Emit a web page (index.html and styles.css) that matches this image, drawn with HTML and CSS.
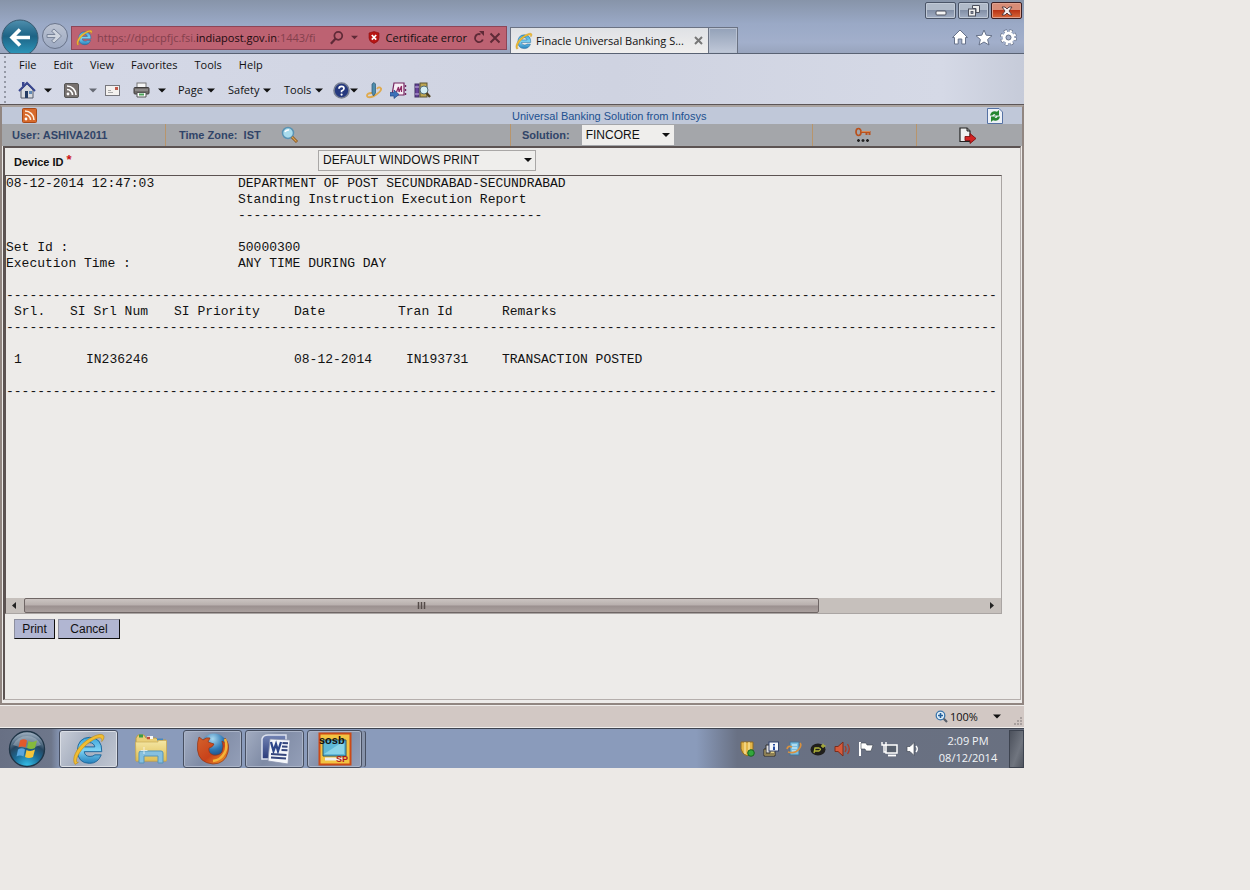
FILE: index.html
```html
<!DOCTYPE html>
<html lang="en">
<head>
<meta charset="utf-8">
<title>Finacle Universal Banking Solution</title>
<link rel="stylesheet" href="styles.css">
</head>
<body>
<svg class="defs" aria-hidden="true">
  <defs>
    <linearGradient id="gBack" x1="0" y1="0" x2="0" y2="1"><stop offset="0" stop-color="#4f8fae"/><stop offset=".45" stop-color="#1d6385"/><stop offset="1" stop-color="#2e9cc0"/></linearGradient>
    <linearGradient id="gFwd" x1="0" y1="0" x2="0" y2="1"><stop offset="0" stop-color="#bdc4d2"/><stop offset="1" stop-color="#9ca9c2"/></linearGradient>
    <linearGradient id="gIe" x1="0" y1="0" x2="0" y2="1"><stop offset="0" stop-color="#3ba4da"/><stop offset=".5" stop-color="#7fd3f3"/><stop offset="1" stop-color="#2581bd"/></linearGradient>
    <radialGradient id="gOrb" cx=".5" cy="1" r="1"><stop offset="0" stop-color="#35c4ee"/><stop offset=".4" stop-color="#1b6b96"/><stop offset=".65" stop-color="#26455f"/><stop offset="1" stop-color="#a9b9c9"/></radialGradient>
    <linearGradient id="gFolder" x1="0" y1="0" x2="0" y2="1"><stop offset="0" stop-color="#f4e6a4"/><stop offset="1" stop-color="#dfbf55"/></linearGradient>
    <linearGradient id="gFox" x1="0" y1="0" x2="1" y2="1"><stop offset="0" stop-color="#d4622b"/><stop offset=".55" stop-color="#c9421a"/><stop offset="1" stop-color="#f2a32c"/></linearGradient>
    <radialGradient id="gGlobe" cx=".45" cy=".2" r=".8"><stop offset="0" stop-color="#a8d8ef"/><stop offset=".5" stop-color="#2e78b4"/><stop offset="1" stop-color="#173468"/></radialGradient>
    <linearGradient id="gWord" x1="0" y1="0" x2="0" y2="1"><stop offset="0" stop-color="#7384b4"/><stop offset="1" stop-color="#2a3b7a"/></linearGradient>
    <symbol id="ie" viewBox="0 0 32 32">
      <path d="M28 18.500H11.500Q12 23 17 23Q20 23 21.500 21.500H27.500Q24.500 29.500 16.500 29.500Q5.500 29.500 5 17.500Q5.500 5.500 16.500 5Q28.500 5.500 28 18.500ZM11.700 14H21.500Q20.500 10 16.500 10Q12.500 10 11.700 14Z" fill="url(#gIe)" stroke="#1c6599" stroke-width=".9"/>
      <path d="M3 30.500C-1 26 4 15 13 8.500C21 2.500 29 .5 30 4C30.500 6 29 8 28 9C28.500 6 27 4.500 23 6C15 9 6.500 18 4.500 25C4 27.500 4 29 6 28.500Z" fill="#f1bd31" stroke="#b98b1e" stroke-width=".6"/>
    </symbol>
    <symbol id="caret" viewBox="0 0 8 5"><path d="M0 .5H8L4 4.500Z" fill="currentColor"/></symbol>
    <symbol id="mag" viewBox="0 0 16 16"><circle cx="9.500" cy="5.500" r="4.500" fill="none" stroke="currentColor" stroke-width="2"/><path d="M6.500 8.500L1 14.500" stroke="currentColor" stroke-width="2.600"/></symbol>
  </defs>
</svg>

<div class="desktop">
  <header class="chrome">
    <div class="window-controls">
      <button class="wc" aria-label="Minimize"><svg width="12" height="10" viewBox="0 0 12 10"><rect x="1" y="5" width="10" height="4" rx="1" fill="#f4f4f4" stroke="#4b4f5c"/></svg></button>
      <button class="wc" aria-label="Restore"><svg width="12" height="12" viewBox="0 0 12 12"><path d="M4.500 .5H11.500V7.500H8V3.500H4.500Z" fill="#eee" stroke="#4b4f5c"/><rect x=".5" y="4" width="7" height="7" fill="#eee" stroke="#4b4f5c"/><rect x="3" y="6.500" width="2" height="2" fill="#8b95aa" stroke="#4b4f5c" stroke-width=".8"/></svg></button>
      <button class="wc wc-close" aria-label="Close"><svg width="12" height="10" viewBox="0 0 12 10"><path d="M1 1H4L6 3L8 1H11L8 5L11 9H8L6 7L4 9H1L4 5Z" fill="#f6eeee" stroke="#4e3436" stroke-width=".9"/></svg></button>
    </div>
    <div class="nav">
      <button class="plain back" aria-label="Back"><svg width="38" height="36" viewBox="0 0 38 36"><circle cx="19" cy="19" r="18" fill="url(#gBack)" stroke="#3a5a70"/><path d="M29 18.500H12M19 10.500L11 18.500L19 26.500" fill="none" stroke="#fff" stroke-width="3.600"/></svg></button>
      <button class="plain" aria-label="Forward"><svg width="28" height="28" viewBox="0 0 28 28"><circle cx="14" cy="14" r="12.500" fill="url(#gFwd)" stroke="#69748a"/><path d="M6 12.500H14L10.500 9L13 7L20.500 14L13 21L10.500 19L14 15.500H6Z" fill="#cfd5df" stroke="#798499"/></svg></button>
      <div class="address">
        <svg width="17" height="17"><use href="#ie"/></svg>
        <span class="url">https://dpdcpfjc.fsi.<b>indiapost.gov.in</b>:1443/fi</span>
        <svg class="ico-search" width="14" height="14"><use href="#mag"/></svg>
        <svg class="addr-caret" width="7" height="5"><use href="#caret"/></svg>
        <svg width="12" height="13" viewBox="0 0 12 13"><path d="M6 .5L11 2V7Q11 10.500 6 12.500Q1 10.500 1 7V2Z" fill="#b81414" stroke="#8c1010" stroke-width=".6"/><path d="M3.800 4L8.200 8.600M8.200 4L3.800 8.600" stroke="#fff" stroke-width="1.700"/></svg>
        <span class="cert">Certificate error</span>
        <svg width="12" height="13" viewBox="0 0 12 13"><path d="M9.800 8.500A4 4 0 1 1 7.500 3.300" fill="none" stroke="#5f2a37" stroke-width="1.900"/><path d="M6 0H11V5Z" fill="#5f2a37"/></svg>
        <svg width="12" height="12" viewBox="0 0 12 12"><path d="M1.500 1.500L10.500 10.500M10.500 1.500L1.500 10.500" stroke="#5f2a37" stroke-width="2"/></svg>
      </div>
      <div class="tabs">
        <div class="tab"><svg width="18" height="18"><use href="#ie"/></svg><span>Finacle Universal Banking S...</span><svg width="9" height="9" viewBox="0 0 9 9"><path d="M1 1L8 8M8 1L1 8" stroke="#777" stroke-width="2"/></svg></div>
        <button class="newtab" aria-label="New tab"></button>
      </div>
      <div class="nav-tools">
        <svg width="16" height="16" viewBox="0 0 16 16"><path d="M8 1L15.500 8.500H13.500V15H9.800V10H6.200V15H2.500V8.500H.5Z" fill="#fff" stroke="#66728a"/></svg>
        <svg width="18" height="17" viewBox="0 0 18 17"><path d="M9 1L11.200 6.200L17 6.700L12.600 10.500L14 16L9 13L4 16L5.400 10.500L1 6.700L6.800 6.200Z" fill="#fff" stroke="#66728a"/></svg>
        <svg width="17" height="17" viewBox="0 0 17 17"><circle cx="8.500" cy="8.500" r="6.400" fill="none" stroke="#66728a" stroke-width="4" stroke-dasharray="3 2.026"/><circle cx="8.500" cy="8.500" r="6.400" fill="none" stroke="#fff" stroke-width="2.600" stroke-dasharray="2.300 2.726" stroke-dashoffset="-.35"/><circle cx="8.500" cy="8.500" r="4.300" fill="#dce1ea" stroke="#fff" stroke-width="3"/><circle cx="8.500" cy="8.500" r="2.500" fill="#a5b0ca" stroke="#66728a"/></svg>
      </div>
    </div>
  </header>

  <div class="bars">
    <nav class="menubar">
      <button class="plain">File</button><button class="plain">Edit</button><button class="plain">View</button><button class="plain">Favorites</button><button class="plain">Tools</button><button class="plain">Help</button>
    </nav>
    <div class="commandbar">
      <svg width="18" height="18" viewBox="0 0 18 18"><path d="M3 9V17H15V9L9 3Z" fill="#d8dbe0" stroke="#555c6c"/><path d="M1 10L9 2L17 10" fill="none" stroke="#39468f" stroke-width="2"/><rect x="4" y="1" width="2.500" height="4" fill="#39468f"/><rect x="7" y="10" width="3" height="7" fill="#243b62"/><rect x="11" y="10" width="3" height="3" fill="#5f88b5"/></svg>
      <svg width="8" height="5"><use href="#caret"/></svg>
      <svg width="15" height="15" viewBox="0 0 15 15"><rect x=".5" y=".5" width="14" height="14" rx="1.500" fill="#77716f" stroke="#555"/><circle cx="4" cy="11" r="1.400" fill="#fff"/><path d="M3 6.500A5.500 5.500 0 0 1 8.500 12M3 3A9 9 0 0 1 12 12" fill="none" stroke="#fff" stroke-width="1.600"/></svg>
      <svg class="dim" width="8" height="5"><use href="#caret"/></svg>
      <svg width="15" height="11" viewBox="0 0 15 11"><rect x=".5" y=".5" width="14" height="10" fill="#f3f1ef" stroke="#77777d"/><path d="M3 7.500H8M3 5.500H6" stroke="#aaa"/><rect x="10" y="2" width="3" height="3" fill="#c25748"/></svg>
      <svg width="17" height="16" viewBox="0 0 17 16"><rect x="4" y="1" width="9" height="6" fill="#f6f6f6" stroke="#777"/><rect x="1" y="5.500" width="15" height="6.500" rx="1" fill="#6f6b69" stroke="#403e3e"/><path d="M2 8H15" stroke="#aaa"/><path d="M4 10.500H13V15H4Z" fill="#fff" stroke="#555"/><path d="M6 12.500H11" stroke="#4ba35b" stroke-width="2"/></svg>
      <svg width="8" height="5"><use href="#caret"/></svg>
      <button class="plain drop">Page<svg width="8" height="5"><use href="#caret"/></svg></button>
      <button class="plain drop">Safety<svg width="8" height="5"><use href="#caret"/></svg></button>
      <button class="plain drop">Tools<svg width="8" height="5"><use href="#caret"/></svg></button>
      <button class="plain drop tight" aria-label="Help menu"><svg width="17" height="17" viewBox="0 0 17 17"><circle cx="8.500" cy="8.500" r="7.500" fill="#25397f" stroke="#777f92" stroke-width="1.600"/><path d="M6 6.800Q6 4.300 8.500 4.300Q11 4.300 11 6.500Q11 8 8.600 9V10.300" fill="none" stroke="#fff" stroke-width="1.700"/><circle cx="8.600" cy="12.600" r="1.100" fill="#fff"/></svg><svg width="8" height="5"><use href="#caret"/></svg></button>
      <svg width="17" height="17" viewBox="0 0 17 17"><path d="M6 11Q1 11 1 14Q2 16.500 8 14Q16 9 15 6.500Q13 4 11 7" fill="none" stroke="#dfaa4e" stroke-width="1.900"/><path d="M6 2L8 .5L9.500 2V11L7.500 14L6 11Z" fill="#4e8dac" stroke="#2b5876" stroke-width=".7"/></svg>
      <svg width="17" height="17" viewBox="0 0 17 17"><path d="M4 1H14V13H2Z" fill="#f7edf5" stroke="#74245f" stroke-width="1.200"/><path d="M6.500 10L8.500 5L9 10L11.500 4V10" fill="none" stroke="#8e2a63" stroke-width="1.200"/><path d="M15.500 3V5M15.500 7V9M15.500 11V13" stroke="#74245f" stroke-width="1.400"/><path d="M0 10.500H4V8L9 12.500L4 16.500V14H0Z" fill="#3d71b8" stroke="#244a88" stroke-width=".7"/></svg>
      <svg width="17" height="17" viewBox="0 0 17 17"><rect x="1" y="2" width="4" height="13" fill="#67429a" stroke="#413064"/><path d="M1 5H5M1 12H5" stroke="#c9b8e2"/><rect x="6" y="1" width="7" height="14" fill="#bda551" stroke="#5b5435"/><circle cx="10" cy="8" r="4" fill="#d4eef4" stroke="#536c79"/><path d="M12.500 11L16 15" stroke="#504222" stroke-width="2.400"/></svg>
    </div>
  </div>

  <main class="page">
    <div class="brandbar">
      <svg width="15" height="15" viewBox="0 0 15 15"><rect x=".5" y=".5" width="14" height="14" rx="1" fill="#d76a2c" stroke="#a84a18"/><circle cx="4" cy="11" r="1.400" fill="#fff"/><path d="M3 6.500A5.500 5.500 0 0 1 8.500 12M3 3A9 9 0 0 1 12 12" fill="none" stroke="#ffeedd" stroke-width="1.500"/></svg>
      <span class="brand">Universal Banking Solution from Infosys</span>
      <svg width="16" height="16" viewBox="0 0 16 16"><path d="M.5 .5H12L15.500 4V15.500H.5Z" fill="#edf1f7" stroke="#5672a4"/><path d="M3 7.500Q4 3 8 3.200L10 3.700L12 2V7.500H7L8.500 6Q6 5.500 5.300 7.500Z" fill="#258631"/><path d="M13 8.500Q12 13 8 12.800L6 12.300L4 14V8.500H9L7.500 10Q10 10.500 10.700 8.500Z" fill="#258631"/></svg>
    </div>
    <div class="sessionbar">
      <div class="cell">User: ASHIVA2011</div>
      <div class="cell ruled">Time Zone:&nbsp; IST
        <svg class="tz" width="18" height="18" viewBox="0 0 18 18"><circle cx="7" cy="7" r="5.500" fill="#a9dced" stroke="#5a93b4" stroke-width="1.500"/><path d="M4 6Q5 3.500 8 4" stroke="#fff" stroke-width="1.500" fill="none"/><path d="M11 11L16 16" stroke="#8a5520" stroke-width="3"/><path d="M11 11L15.500 15.500" stroke="#d8a350" stroke-width="1.200"/></svg></div>
      <div class="cell ruled solution"><label for="solution">Solution:</label><span class="picker picker-flat"><select id="solution"><option>FINCORE</option></select></span></div>
      <div class="cell ruled centered"><svg width="17" height="16" viewBox="0 0 17 16"><ellipse cx="3.500" cy="5" rx="2.500" ry="3.500" fill="none" stroke="#b9511d" stroke-width="1.700"/><path d="M6 5H15.500M11.500 5V8M14.500 5V8" stroke="#b9511d" stroke-width="2"/><path d="M6.500 4.500H15" stroke="#e4a06a" stroke-width=".7"/><path d="M3.500 12V15M2 13.500H5M8 12V15M6.500 13.500H9.500M12.500 12V15M11 13.500H14" stroke="#222" stroke-width="1.400"/></svg></div>
      <div class="cell ruled centered"><svg width="18" height="17" viewBox="0 0 18 17"><path d="M1 1H8L11 4V14.500H1Z" fill="#eee" stroke="#222" stroke-width="1.200"/><path d="M8 1V4H11" fill="#999" stroke="#222"/><path d="M6 9.500H11V6.500L17 11.500L11 16.500V13.500H6Z" fill="#d32222" stroke="#7c1212" stroke-width=".9"/></svg></div>
    </div>
    <div class="frame">
      <div class="device">
        <label for="device">Device ID <span class="req">*</span></label>
        <span class="picker picker-device"><select id="device"><option>DEFAULT WINDOWS PRINT</option></select></span>
      </div>
      <section class="report">
        <div class="sheet">
          <div class="facts">
            <span>08-12-2014 12:47:03</span><span>DEPARTMENT OF POST SECUNDRABAD-SECUNDRABAD</span>
            <span></span><span>Standing Instruction Execution Report</span>
            <span></span><span>---------------------------------------</span>
            <span>&nbsp;</span><span></span>
            <span>Set Id :</span><span>50000300</span>
            <span>Execution Time :</span><span>ANY TIME DURING DAY</span>
            <span>&nbsp;</span><span></span>
          </div>
          <div class="dashes">-------------------------------------------------------------------------------------------------------------------------------</div>
          <table class="rows">
            <colgroup><col class="c-srl"><col class="c-num"><col class="c-pri"><col class="c-date"><col class="c-tran"><col></colgroup>
            <thead><tr><th>Srl.</th><th>SI Srl Num</th><th>SI Priority</th><th>Date</th><th>Tran Id</th><th>Remarks</th></tr></thead>
            <tbody>
              <tr><td colspan="6" class="dashcell"><div class="dashes">-------------------------------------------------------------------------------------------------------------------------------</div></td></tr>
              <tr class="posting"><td>1</td><td class="in2">IN236246</td><td></td><td>08-12-2014</td><td class="in1">IN193731</td><td>TRANSACTION POSTED</td></tr>
            </tbody>
          </table>
          <div class="dashes">-------------------------------------------------------------------------------------------------------------------------------</div>
        </div>
        <div class="scroll">
          <svg width="18" height="9" viewBox="0 0 18 9"><path d="M10 1V8L6 4.500Z" fill="#222"/></svg>
          <div class="thumb"><svg width="9" height="7" viewBox="0 0 9 7"><path d="M1.500 0V7M4.500 0V7M7.500 0V7" stroke="#554b49" stroke-width="1.500"/></svg></div>
          <svg class="right" width="18" height="9" viewBox="0 0 18 9"><path d="M7 1V8L11 4.500Z" fill="#222"/></svg>
        </div>
      </section>
      <div class="actions"><button class="act print">Print</button><button class="act cancel">Cancel</button></div>
    </div>
  </main>

  <div class="status">
    <svg width="13" height="13" viewBox="0 0 13 13"><circle cx="5.500" cy="5.500" r="4.300" fill="#e4f1fa" stroke="#3b76ac" stroke-width="1.300"/><path d="M3 5.500H8M5.500 3V8" stroke="#24609c" stroke-width="1.600"/><path d="M8.800 8.800L12 12" stroke="#565d68" stroke-width="2.200"/></svg>
    <span>100%</span>
    <svg class="zoomcaret" width="8" height="5"><use href="#caret"/></svg>
    <svg class="grip" width="10" height="10" viewBox="0 0 10 10"><path d="M8 1H10M8 4H10M8 7H10M5 4H7M5 7H7M2 7H4" stroke="#9b9391" stroke-width="1.500"/></svg>
  </div>

  <footer class="taskbar">
    <button class="plain orb" aria-label="Start"><svg width="38" height="38" viewBox="0 0 38 38"><circle cx="19" cy="19" r="17.500" fill="url(#gOrb)" stroke="#1f3547" stroke-width="1.400"/><path d="M5 15A15 14 0 0 1 33 15Q19 21 5 15Z" fill="#c8d3dc" opacity=".4"/><path d="M12 10.500Q16 8 19 10.500L17.500 17.500Q14 15.500 10.500 17.500Z" fill="#e2592b"/><path d="M20.500 11Q24.500 13 29 10.500L27 18Q23 20 19 18Z" fill="#85b93c"/><path d="M10 19.500Q14 17 17 19.500L15.500 26.500Q12 24.500 8.500 26.500Z" fill="#58a5dd"/><path d="M18.500 20Q22.500 22 27 19.500L25 27Q21 29 17 27Z" fill="#f4c53a"/></svg></button>
    <button class="task active" aria-label="Internet Explorer"><svg width="34" height="34"><use href="#ie"/></svg></button>
    <button class="task bare" aria-label="Explorer"><svg width="34" height="32" viewBox="0 0 34 32"><path d="M2 28V5L4 2H10L12 5H22L24 7H32V28Z" fill="#e9cf78" stroke="#b99a48"/><path d="M5 3H9" stroke="#3b9b45" stroke-width="3"/><path d="M13 4.500H19" stroke="#f8f8f8" stroke-width="3"/><path d="M13 5H16" stroke="#c24c3c" stroke-width="2.500"/><path d="M23 6.500H29" stroke="#4787be" stroke-width="2"/><path d="M1.500 9H24V7.500H32.500V28H2Z" fill="url(#gFolder)" stroke="#c8a955" stroke-width=".7"/><path d="M5 30V20Q5 18 7 18H27Q29 18 29 20V30H24V23H10V30Z" fill="#86c0df" stroke="#5795b9"/><path d="M10 14V21M6.500 17.500H13.500" stroke="#fff" stroke-width="1" opacity=".7"/></svg></button>
    <button class="task" aria-label="Firefox"><svg width="34" height="34" viewBox="0 0 34 34"><circle cx="18" cy="15" r="13.500" fill="url(#gGlobe)"/><path d="M3 5L7 8Q10 5 14 6L12 10L18 12Q17 15 13 16Q12 21 17 23Q23 24 26 20Q28 14 26 9L29 11L29 6Q34 12 32 20Q29 32 17 32Q3 31 1.500 18Q1 10 3 5Z" fill="url(#gFox)" stroke="#8f3317" stroke-width=".7"/><path d="M29 7Q32 15 28.500 21Q25 28 17 29" fill="none" stroke="#f4b53a" stroke-width="2.500"/></svg></button>
    <button class="task" aria-label="Word"><svg width="34" height="32" viewBox="0 0 34 32"><path d="M4 6Q5 2 10 2H28V26H4Z" fill="url(#gWord)" stroke="#dce1ee" stroke-width="1.500"/><path d="M12 6L32 7L30 31L10 28Z" fill="#f4f6fa" stroke="#8993ae" stroke-width=".8"/><path d="M13 9L15.500 18L18 11L20 18L23 9" fill="none" stroke="#2c4589" stroke-width="2.300"/><path d="M24.500 10L30 10.300M24 13.500L29.500 13.800M23.500 17L29.500 17.300M13 21L28.500 22M13 24.500L28 25.500" stroke="#35467d" stroke-width="2"/></svg></button>
    <button class="task stack" aria-label="SOSB"><svg width="34" height="34" viewBox="0 0 34 34"><rect x="1.500" y="1.500" width="31" height="31" fill="#f2c342" stroke="#cb4a16" stroke-width="2"/><path d="M5 8H28V24H5Z" fill="#5eb8d7" stroke="#2b5969"/><path d="M6 22L26 9V22Z" fill="#88d3e8"/><path d="M7 27H26" stroke="#eee" stroke-width="3"/><text x="1" y="12" class="logo-a">sosb</text><text x="18" y="30" class="logo-b">SP</text></svg></button>
    <div class="tray">
      <svg width="16" height="16" viewBox="0 0 16 16"><path d="M1 1H13V8Q12 13 7 15Q2 13 1 8Z" fill="#e4b64a" stroke="#8e6b22"/><path d="M5 1V13M9 1V14" stroke="#fff1b5"/><circle cx="11" cy="12" r="3.300" fill="#32a83c" stroke="#186320"/></svg>
      <svg width="16" height="16" viewBox="0 0 16 16"><path d="M1 8H12V15H1Z" fill="#e3cf87" stroke="#332d20"/><path d="M3 4H7V12H3Z" fill="#ddd" stroke="#333"/><rect x="6" y="1" width="9.500" height="9" fill="#f5f7fb" stroke="#32436c"/><path d="M11 3V4.500M11 5.500V9" stroke="#244aa0" stroke-width="2"/><path d="M2 13H11" stroke="#3a3322"/></svg>
      <svg width="17" height="16" viewBox="0 0 17 16"><rect x="4" y="1" width="9" height="13" fill="#78bfe1" stroke="#447597"/><path d="M6 4H11M6 7H11M6 10H10" stroke="#e8f6fb"/><path d="M1 8Q2 4 6 6M2 11Q9 13 13 8Q16 4 14 2" stroke="#d9913e" stroke-width="1.700" fill="none"/></svg>
      <svg width="17" height="16" viewBox="0 0 17 16"><ellipse cx="8" cy="8.500" rx="7.500" ry="6" fill="#201f1c"/><path d="M4 12L5 7H9Q12 8 9 10H5M11 5H15.500M13 2.800V7" stroke="#aeb33a" stroke-width="1.300" fill="none"/></svg>
      <svg width="17" height="16" viewBox="0 0 17 16"><path d="M1 5.500H4L9 1V15L4 10.500H1Z" fill="#d55a3b" stroke="#7e2c1a"/><path d="M11 5Q13 8 11 11M13.500 3Q17 8 13.500 13" fill="none" stroke="#ad3924" stroke-width="1.300"/></svg>
      <svg width="16" height="16" viewBox="0 0 16 16"><path d="M2 1V15" stroke="#fff" stroke-width="2"/><path d="M3 2H8L9 4H15L13 10H8L7 8H3Z" fill="#fff" stroke="#3d434e" stroke-width=".6"/></svg>
      <svg width="17" height="16" viewBox="0 0 17 16"><rect x="5" y="4" width="11" height="8" fill="#58606d" stroke="#fff" stroke-width="1.500"/><path d="M7 14.500H15" stroke="#fff" stroke-width="1.800"/><path d="M1 1V4H5V1M3 4V11H5" stroke="#fff" stroke-width="1.400" fill="none"/></svg>
      <svg width="16" height="16" viewBox="0 0 16 16"><path d="M2 5.500H5L9 1.500V14.500L5 10.500H2Z" fill="#fff" stroke="#464c58" stroke-width=".7"/><path d="M11 5Q13.500 8 11 11" fill="none" stroke="#fff" stroke-width="1.400"/></svg>
    </div>
    <div class="clock"><span>2:09 PM</span><span>08/12/2014</span></div>
    <button class="showdesk" aria-label="Show desktop"></button>
  </footer>
</div>
</body>
</html>
```

FILE: styles.css
```css
* { box-sizing: border-box; }
body { margin: 0; background: #ece9e6; color: #111; font: 11px/16px "Open Sans", "Noto Sans", sans-serif; }
svg { display: block; flex: none; }
button, select { font: inherit; color: inherit; }
.defs { position: absolute; width: 0; height: 0; }
.plain { border: 0; padding: 0; background: none; display: flex; align-items: center; white-space: nowrap; }
.desktop { width: 100%; max-width: 1024px; }

/* Title strip and address row */
.chrome { background: linear-gradient(#8794a9, #9aa9c6 45%, #a2afcb 80%, #98a4bd); border-bottom: 1px solid #596273; }
.window-controls { display: flex; justify-content: flex-end; gap: 2px; height: 19px; padding: 2px 2px 0 0; }
.wc { width: 31px; height: 17px; padding: 0; border: 1px solid #4a5467; border-radius: 2px; background: linear-gradient(#b0bac9 45%, #8390a7 50%, #a2aec4); box-shadow: inset 0 0 0 1px #c0c9d6; display: flex; align-items: center; justify-content: center; }
.wc-close { border-color: #3d1f22; background: linear-gradient(#d98d77 45%, #ba3517 50%, #d8683a); box-shadow: inset 0 0 0 1px #e0a18d; }
.nav { display: flex; align-items: center; height: 34px; }
.back { align-self: flex-start; width: 41px; padding-left: 1px; height: 34px; overflow: hidden; align-items: flex-start; }
.address { display: flex; align-items: center; flex: 0 1 436px; min-width: 0; height: 24px; margin: 3px 3px 0 2px; padding: 0 5px 0 4px; border: 1px solid #8d4658; background: #bd6272; gap: 4px; }
.url { flex: 1; min-width: 0; overflow: hidden; white-space: nowrap; color: #84404d; }
.url b { font-weight: 400; color: #1b0a0e; }
.ico-search { color: #5f2a37; }
.addr-caret { color: #5f2a37; margin: 0 6px 0 3px; }
.cert { white-space: nowrap; margin: 0 2px; }
.tabs { display: flex; align-self: flex-end; flex: 0 1 228px; height: 26px; }
.tab { display: flex; flex: 1; align-items: center; gap: 3px; min-width: 0; padding: 0 5px 0 4px; border: 1px solid #6a7283; border-bottom: 0; background: linear-gradient(#dfe1e5, #f0efee); white-space: nowrap; }
.tab span { flex: 1; overflow: hidden; }
.newtab { width: 29px; padding: 0; border: 1px solid #6a7283; border-width: 1px 1px 0 0; background: linear-gradient(#93a1b8, #c0c8d8); box-shadow: inset 0 0 0 1px #b9c2d2; }
.nav-tools { display: flex; align-items: center; gap: 7px; margin-left: auto; padding: 2px 7px 0 0; }

/* Menu bar and command bar */
.bars { padding-left: 10px; background: radial-gradient(circle at 1px 1px, #9599a6 1px, transparent 1px) 4px 2px / 2px 5px repeat-y, linear-gradient(90deg, #d5d9e7, #cfd3e1 60%, #d5d9e6 92%, #c6cbd9); border-bottom: 1px solid #5c5658; }
.menubar { display: flex; align-items: center; gap: 17px; height: 22px; padding-left: 9px; }
.commandbar { display: grid; grid-template-columns: 26px 20px 25px 16px 28px 25px 20px 50px 56px 49px 33px 24px 24px 24px; align-items: center; height: 28px; padding-left: 8px; }
.drop { gap: 4px; }
.tight { gap: 0; }
.dim { color: #666a74; }

/* Web page area */
.page { border: 2px solid #918681; border-top-color: #aaa39f; background: #edebe9; font-family: "Liberation Sans", Arial, sans-serif; }
.brandbar { display: grid; grid-template-columns: 490px 1fr 16px; align-items: center; height: 17px; padding: 0 19px 0 20px; background: #c0c8d9; }
.brand { color: #215090; }
.sessionbar { display: grid; grid-template-columns: 163px 345px 302px 104px 1fr; height: 22px; background: #a4a6aa; color: #304468; font-weight: 700; }
.cell { display: flex; align-items: center; padding-left: 10px; white-space: nowrap; }
.ruled { border-left: 1px solid #b8956c; padding-left: 13px; }
.solution { padding-left: 11px; gap: 12px; }
.centered { justify-content: center; padding: 0 3px 0 0; }
.tz { margin-left: 20px; }
.picker { position: relative; display: flex; }
.picker::after { content: ""; position: absolute; right: 4px; top: 50%; margin-top: -2px; border: 4px solid transparent; border-top: 4px solid #111; border-bottom: 0; pointer-events: none; }
.picker select { appearance: none; width: 100%; border: 1px solid #a9a7a6; border-radius: 0; background: #efeeec; color: #111; font-size: 12px; font-weight: 400; line-height: 16px; padding: 0 18px 0 4px; }
.picker-flat { width: 92px; height: 20px; }
.picker-flat select { border: 0; }
.picker-device { width: 218px; height: 21px; }
.frame { border: solid; border-width: 2px 1px 1px 2px; border-color: #5c5352 #b5aeac #b5aeac #5c5352; margin: 0 1px 3px 1px; min-height: 554px; }
.device { display: grid; grid-template-columns: 304px auto; justify-content: start; align-items: center; height: 27px; padding: 0 0 3px 9px; font-weight: 700; }
.device label { padding-top: 4px; }
.req { color: #c11; font-size: 13px; line-height: 8px; vertical-align: 2px; }

/* Printed report */
.report { border: 1px solid #5c5352; border-right-color: #aaa5a3; border-bottom-color: #aaa5a3; margin-right: 18px; }
.sheet { min-height: 422px; overflow: hidden; font: 13px/16px "Liberation Mono", "Courier New", monospace; white-space: nowrap; }
.facts { display: grid; grid-template-columns: 232px 1fr; }
.dashes { width: 0; min-width: 100%; overflow: hidden; }
.rows { width: 100%; table-layout: fixed; border-collapse: collapse; }
.rows th, .rows td { padding: 0; font-weight: 400; text-align: left; }
.rows th:first-child, .rows .posting td:first-child { padding-left: 8px; }
.rows .posting td { padding: 16px 0; }
.rows .posting .in2 { padding-left: 16px; }
.rows .posting .in1 { padding-left: 8px; }
.c-srl { width: 64px; }
.c-num { width: 104px; }
.c-pri { width: 120px; }
.c-date { width: 104px; }
.c-tran { width: 104px; }
.scroll { display: flex; align-items: center; height: 15px; background: #c6c0bc; }
.thumb { flex: 0 1 795px; height: 15px; border: 1px solid #6f6665; border-radius: 2px; background: linear-gradient(#cbc4c1, #b8afad 48%, #9b908f 52%, #aaa09e); display: flex; align-items: center; justify-content: center; }
.right { margin-left: auto; }
.actions { display: flex; gap: 3px; padding: 5px 9px; }
.act { height: 20px; padding: 0; border: 1px solid #8d8f9f; border-right-color: #111; border-bottom-color: #111; background: #b1b6d2; font-size: 12px; line-height: 16px; }
.print { width: 41px; }
.cancel { width: 62px; }

/* Status bar */
.status { display: flex; align-items: center; justify-content: flex-end; height: 23px; padding-right: 2px; background: #d2c8c4; border: solid #f0eeec; border-width: 1px 0; }
.status span { margin-left: 2px; width: 30px; }
.zoomcaret { margin: 0 11px 0 13px; }
.grip { align-self: flex-end; }

/* Taskbar */
.taskbar { display: flex; align-items: stretch; height: 40px; padding-top: 1px; border-top: 1px solid #3e4450; background: linear-gradient(90deg, #687084, #6e778b 5%, #8a9bbb 6%, #8a9bbb 68%, #697184 72%, #697080); }
.orb { width: 59px; justify-content: center; padding-right: 5px; }
.task { width: 59px; margin-right: 3px; padding: 0; border: 1px solid #474f61; border-radius: 3px; background: linear-gradient(120deg, #a3adc2, #7f8ba5 45%, #949fb8); box-shadow: inset 0 0 0 1px #aab4c8; display: flex; align-items: center; justify-content: center; }
.active { background: linear-gradient(120deg, #c9ced8, #a4adbe 45%, #c1c7d2); box-shadow: inset 0 0 0 1px #dadee5; }
.bare { background: none; border-color: transparent; box-shadow: none; }
.stack { width: 55px; box-shadow: inset 0 0 0 1px #aab4c8, 4px 0 0 -1px #8793aa, 5px 0 0 -1px #474f61; }
.logo-a { font: 700 11px "Liberation Sans", sans-serif; fill: #111; }
.logo-b { font: 700 9px "Liberation Sans", sans-serif; fill: #b01818; }
.tray { display: flex; align-items: center; gap: 7px; margin-left: auto; }
.clock { display: flex; flex-direction: column; justify-content: center; width: 88px; padding-left: 6px; text-align: center; color: #f2f4f7; line-height: 17px; }
.showdesk { width: 15px; padding: 0; border: 1px solid #3d434f; background: linear-gradient(110deg, #4c515c, #70757f 60%, #50555f); }
```
